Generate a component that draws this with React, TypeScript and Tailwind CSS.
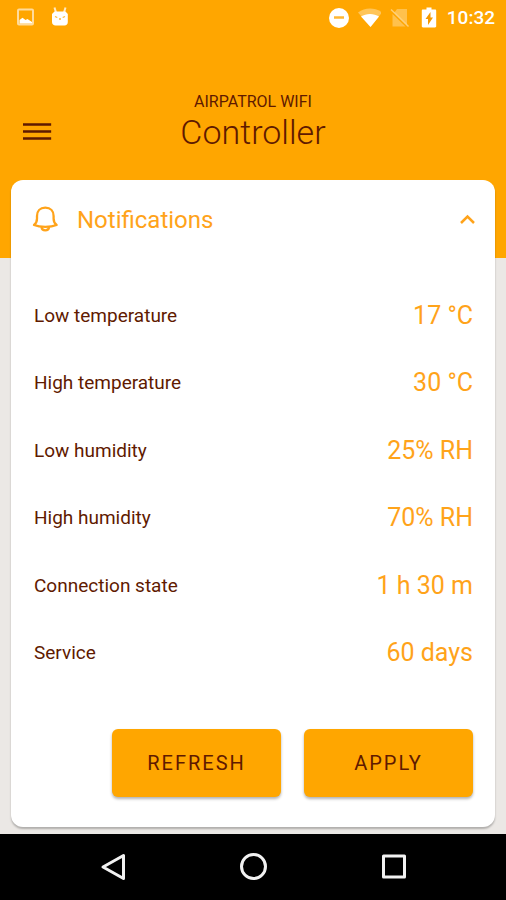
import { useState } from 'react'

const initialSettings = [
    { label: 'Low temperature', value: '17 °C' },
    { label: 'High temperature', value: '30 °C' },
    { label: 'Low humidity', value: '25% RH' },
    { label: 'High humidity', value: '70% RH' },
    { label: 'Connection state', value: '1 h 30 m' },
    { label: 'Service', value: '60 days' },
]

function StatusBar() {
    return (
        <div className="flex h-9 items-center justify-between pl-4 pr-[11px] text-white">
            <div className="flex items-center gap-[14px]">
                <svg className="h-5 w-5" viewBox="0 0 20 20" fill="none" aria-hidden="true">
                    <rect x="2" y="1.500" width="15" height="15" rx="1" stroke="#ffdb9c" strokeWidth="2" />
                    <path d="M3.500 15.500v-3.500l3-2.300 3 2.300 2-1 4.500 3v1.500z" fill="#fff" />
                </svg>
                <svg className="h-6 w-5" viewBox="0 0 20 24" aria-hidden="true">
                    <path d="M4.500 1.500l1.500 5M15.500 1.500l-1.500 5" stroke="#ffe9c4" strokeWidth="2" fill="none" />
                    <path d="M4.500 5.500h11l2.300 2.500v8c0 2-1.300 3.500-3.300 3.500h-9C3.500 19.500 2 18 2 16V8z" fill="#fff" />
                    <path d="M5 10.500l2.300 1M15 10.500l-2.300 1M9 13h2" stroke="#ffb733" strokeWidth="1.300" />
                </svg>
            </div>
            <div className="flex items-center gap-1.5">
                <svg className="h-6 w-6" viewBox="0 0 24 24" aria-hidden="true">
                    <circle cx="12" cy="12" r="10" fill="#fff" />
                    <path d="M7 11.500h10" stroke="#ffb733" strokeWidth="2.500" />
                </svg>
                <svg className="h-6 w-6" viewBox="0 0 24 24" aria-hidden="true">
                    <path d="M1 6.500C8 1.200 18 1.200 25 6.500L13.500 21z" fill="#fff" opacity="0.350" />
                    <path d="M4 10.500c5-3.500 13-3.500 18 0L13.500 21z" fill="#fff" />
                </svg>
                <svg className="h-6 w-6" viewBox="0 0 24 24" aria-hidden="true">
                    <path d="M10 3h10v15.500L7.500 6.500zM5.500 8l13 12.500h-13z" fill="#fff" opacity="0.300" />
                    <path d="M4 3.500l17.500 17" stroke="#fff" strokeWidth="1.500" opacity="0.450" />
                </svg>
                <svg className="h-6 w-6" viewBox="0 0 24 24" aria-hidden="true">
                    <path d="M9.500 1.500h5v2h3.500c.8 0 1.200.5 1.200 1.200v15.600c0 .7-.4 1.200-1.200 1.200H6c-.8 0-1.200-.5-1.200-1.200V4.700C4.800 4 5.200 3.500 6 3.500h3.500z" fill="#fff" />
                    <path d="M13.500 6l-5 7H11v6l5-7.500h-2.500z" fill="#f59a00" />
                </svg>
                <span className="text-[19px] font-medium">10:32</span>
            </div>
        </div>
    )
}

function NavigationBar() {
    return (
        <nav className="flex h-[66px] items-center justify-center gap-[108px] bg-black">
            <button type="button" aria-label="Back">
                <svg className="h-8 w-8" viewBox="0 0 32 32" fill="none" stroke="#f2f2f2" strokeWidth="3" strokeLinejoin="round">
                    <path d="M26.500 4.500v23L6 16z" />
                </svg>
            </button>
            <button type="button" aria-label="Home">
                <svg className="h-8 w-8" viewBox="0 0 32 32" fill="none" stroke="#f2f2f2" strokeWidth="3">
                    <circle cx="16.500" cy="15.500" r="12" />
                </svg>
            </button>
            <button type="button" aria-label="Recent apps">
                <svg className="h-8 w-8" viewBox="0 0 32 32" fill="none" stroke="#f2f2f2" strokeWidth="3" strokeLinejoin="round">
                    <rect x="6.500" y="5" width="21" height="21" />
                </svg>
            </button>
        </nav>
    )
}

export default function App() {
    const [open, setOpen] = useState(true)

    return (
        <div className="flex min-h-screen flex-col bg-[#ebe8e5] font-[Roboto,sans-serif]">
            <header className="bg-[#ffa600] pb-20">
                <StatusBar />
                <div className="grid grid-cols-[1fr_auto_1fr] px-[23px] pt-14 pb-[26px] text-[#5f1a00]">
                    <button type="button" aria-label="Menu" className="mt-6 h-8 w-8 self-start">
                        <svg className="h-8 w-8" viewBox="0 0 32 32" stroke="currentColor" strokeWidth="2.300">
                            <path d="M1 8.500h26M1 15.500h26M1 22.500h26" strokeLinecap="square" />
                        </svg>
                    </button>
                    <div className="text-center">
                        <p className="text-base leading-5">AIRPATROL WIFI</p>
                        <h1 className="text-[34px] font-light leading-10">Controller</h1>
                    </div>
                </div>
            </header>

            <main className="mx-[11px] -mt-[78px] mb-[7px] flex flex-1 flex-col rounded-xl bg-white shadow-[0_2px_2px_rgba(0,0,0,0.25)]">
                <button
                    type="button"
                    aria-expanded={open}
                    onClick={() => setOpen(!open)}
                    className="flex h-20 items-center pl-5 pr-[18px] text-[#ffa31a]"
                >
                    <svg className="h-7 w-7" viewBox="0 0 28 28" fill="none" stroke="currentColor" strokeWidth="2.300" strokeLinejoin="round" aria-hidden="true">
                        <path d="M3 19c2-1.500 3-3.500 3-6.500V10c0-5 3-8.300 8.300-8.300s8.300 3.300 8.300 8.300v2.500c0 3 1 5 3 6.500-6 2.500-16.600 2.500-22.600 0z" />
                        <path d="M10.500 21c.5 4.500 7 4.500 7.600 0" />
                    </svg>
                    <span className="ml-[18px] flex-1 text-left text-2xl">Notifications</span>
                    <svg className="h-5 w-5" viewBox="0 0 20 20" fill="none" stroke="currentColor" strokeWidth="2.500" aria-hidden="true">
                        <path d={open ? 'M4 13l6.500-6.500L17 13' : 'M4 6.500l6.500 6.500L17 6.500'} />
                    </svg>
                </button>

                {open && (
                    <dl className="mt-[22px] flex flex-1 flex-col pl-[23px] pr-[22px]">
                        {initialSettings.map((item) => (
                            <div key={item.label} className="flex flex-1 items-center justify-between">
                                <dt className="text-[19px] text-[#5f1a00]">{item.label}</dt>
                                <dd className="text-[25px] leading-8 text-[#ffa31a]">{item.value}</dd>
                            </div>
                        ))}
                    </dl>
                )}

                <div className="mt-[42px] mb-[30px] flex justify-end gap-[23px] pl-[23px] pr-[22px] text-[20px] tracking-widest text-[#5f1a00]">
                    <button type="button" className="h-17 w-[169px] rounded-md bg-[#ffa600] shadow-[0_2px_3px_rgba(0,0,0,0.3)]">
                        REFRESH
                    </button>
                    <button type="button" className="h-17 w-[169px] rounded-md bg-[#ffa600] shadow-[0_2px_3px_rgba(0,0,0,0.3)]">
                        APPLY
                    </button>
                </div>
            </main>

            <NavigationBar />
        </div>
    )
}
